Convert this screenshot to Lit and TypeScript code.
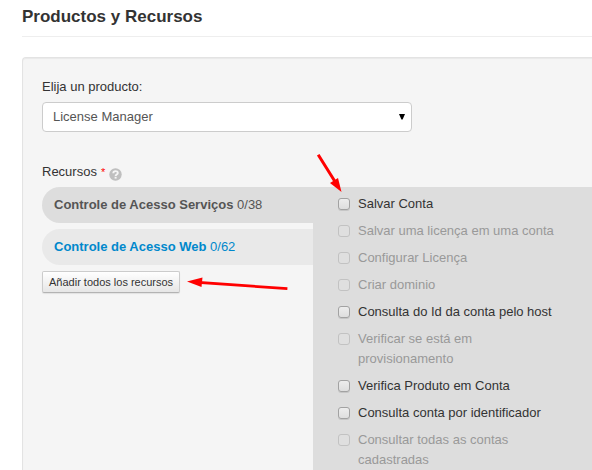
import { LitElement, html, css } from "lit";
import { customElement, property, state } from "lit/decorators.js";
import { classMap } from "lit/directives/class-map.js";

interface Resource {
  label: string;
  enabled: boolean;
}

interface Group {
  name: string;
  count: string;
}

const GROUPS: Group[] = [
  { name: "Controle de Acesso Serviços", count: "0/38" },
  { name: "Controle de Acesso Web", count: "0/62" },
];

const RESOURCES: Resource[] = [
  { label: "Salvar Conta", enabled: true },
  { label: "Salvar uma licença em uma conta", enabled: false },
  { label: "Configurar Licença", enabled: false },
  { label: "Criar dominio", enabled: false },
  { label: "Consulta do Id da conta pelo host", enabled: true },
  { label: "Verificar se está em provisionamento", enabled: false },
  { label: "Verifica Produto em Conta", enabled: true },
  { label: "Consulta conta por identificador", enabled: true },
  { label: "Consultar todas as contas cadastradas", enabled: false },
];

@customElement("resource-list")
export class ResourceList extends LitElement {
  @property({ attribute: false }) items: Resource[] = [];

  static styles = css`
    :host {
      display: block;
    }
    .list {
      list-style: none;
      margin: 0;
      padding: 0;
      display: flex;
      flex-direction: column;
      gap: 7px;
      max-width: 224px;
    }
    .row {
      display: grid;
      grid-template-columns: 12px 1fr;
      column-gap: 8px;
      align-items: start;
      color: #333;
    }
    .off {
      color: #999;
    }
    .box {
      appearance: none;
      box-sizing: border-box;
      width: 12px;
      height: 12px;
      margin: 4px 0 0;
      border: 1px solid #a2a2a2;
      border-radius: 3px;
      background: linear-gradient(#ededed, #dedede);
      box-shadow: 0 1px 0 rgba(0, 0, 0, 0.1);
    }
    .box:checked {
      background: #555;
    }
    .box:disabled {
      border-color: #c2c2c2;
      background: #dfdfdf;
      box-shadow: none;
    }
  `;

  render() {
    return html`<ul class="list">
      ${this.items.map(
        (item) => html`<li>
          <label class=${classMap({ row: true, off: !item.enabled })}>
            <input class="box" type="checkbox" ?disabled=${!item.enabled} />
            <span>${item.label}</span>
          </label>
        </li>`,
      )}
    </ul>`;
  }
}

@customElement("app-root")
export class AppRoot extends LitElement {
  @state() private active = 0;

  static styles = css`
    :host {
      display: block;
      font: 13px/20px "Liberation Sans", Arial, sans-serif;
      color: #333;
      background: #fff;
      overflow: hidden;
    }
    .page {
      box-sizing: border-box;
      min-height: 100vh;
      padding: 7px 0 0 22px;
      display: flex;
      flex-direction: column;
    }
    .title {
      margin: 0 0 20px;
      padding-bottom: 9px;
      border-bottom: 1px solid #eee;
      font-size: 17px;
      line-height: 20px;
      font-weight: bold;
    }
    .well {
      flex: 1;
      display: flex;
      flex-direction: column;
      border: 1px solid #e3e3e3;
      border-width: 1px 0 0 1px;
      border-radius: 4px 0 0 0;
      background: #f5f5f5;
      box-shadow: inset 0 1px 1px rgba(0, 0, 0, 0.05);
      padding: 19px 0 0 19px;
    }
    .caption {
      display: block;
      margin-bottom: 5px;
    }
    .picker {
      position: relative;
      width: 370px;
      max-width: 100%;
      margin-bottom: 30px;
    }
    .select {
      appearance: none;
      display: block;
      box-sizing: border-box;
      width: 100%;
      height: 30px;
      margin: 0;
      padding: 0 24px 0 10px;
      border: 1px solid #ccc;
      border-radius: 4px;
      background: #fff;
      color: #555;
      font: inherit;
    }
    .caret {
      position: absolute;
      right: 7px;
      top: 12px;
      pointer-events: none;
    }
    .heading {
      display: flex;
      gap: 4px;
      margin-bottom: 5px;
    }
    .required {
      color: #f00;
      font-size: 11px;
    }
    .help {
      margin-top: 6px;
      width: 13px;
      height: 13px;
    }
    .columns {
      flex: 1;
      display: grid;
      grid-template-columns: 271px 1fr;
    }
    .side {
      position: relative;
      display: flex;
      flex-direction: column;
      align-items: flex-start;
      gap: 6px;
    }
    .tab {
      box-sizing: border-box;
      width: 100%;
      height: 36px;
      padding: 0 12px;
      border: 0;
      border-radius: 18px 0 0 18px;
      background: #e9e9e9;
      color: #0088cc;
      font: inherit;
      text-align: left;
      cursor: pointer;
    }
    .current {
      background: #ddd;
      color: #555;
    }
    .add {
      height: 22px;
      padding: 0 6px;
      border: 1px solid #ccc;
      border-bottom-color: #b3b3b3;
      border-radius: 2px;
      background: linear-gradient(#fff, #e6e6e6);
      box-shadow: 0 1px 1px rgba(0, 0, 0, 0.08);
      color: #333;
      font: inherit;
      font-size: 11px;
      cursor: pointer;
    }
    .panel {
      position: relative;
      background: #ddd;
      padding: 7px 0 0 25px;
    }
    .arrow {
      position: absolute;
      pointer-events: none;
    }
    .to-box {
      left: 2px;
      top: -35px;
    }
    .to-button {
      left: 143px;
      top: 86px;
    }
  `;

  render() {
    return html`<main class="page">
      <h1 class="title">Productos y Recursos</h1>
      <section class="well">
        <label class="caption" for="product">Elija un producto:</label>
        <div class="picker">
          <select class="select" id="product">
            <option>License Manager</option>
          </select>
          <svg class="caret" width="6" height="6" viewBox="0 0 6 6" aria-hidden="true">
            <path d="M0 0H6L3.600 5.500H2.400Z" />
          </svg>
        </div>
        <div class="heading">
          <span>Recursos</span>
          <span class="required">*</span>
          <svg class="help" viewBox="0 0 13 13" role="img" aria-label="Ayuda">
            <circle cx="6.5" cy="6.5" r="6.2" fill="#bfbfbf" />
            <path
              d="M4.3 5.2C4.3 2.5 8.8 2.5 8.8 5C8.8 6.6 6.6 6.3 6.6 8"
              fill="none"
              stroke="#f5f5f5"
              stroke-width="1.9"
            />
            <path d="M5.6 8.8h2v1.8H5.6z" fill="#f5f5f5" />
          </svg>
        </div>
        <div class="columns">
          <div class="side">
            ${GROUPS.map(
              (group, i) => html`<button
                class=${classMap({ tab: true, current: i === this.active })}
                @click=${() => (this.active = i)}
              >
                <strong>${group.name}</strong> ${group.count}
              </button>`,
            )}
            <button class="add">Añadir todos los recursos</button>
            <svg class="arrow to-button" width="104" height="20" viewBox="0 0 104 20" aria-hidden="true">
              <path d="M14 9.5L101 15.500" fill="none" stroke="#f00" stroke-width="2.8" stroke-linecap="square" />
              <path d="M2 8.5L17.500 4.500L16.500 14Z" fill="#f00" />
            </svg>
          </div>
          <div class="panel">
            <resource-list .items=${RESOURCES}></resource-list>
            <svg class="arrow to-box" width="30" height="42" viewBox="0 0 30 42" aria-hidden="true">
              <path d="M4 4L19 28" fill="none" stroke="#f00" stroke-width="3" stroke-linecap="square" />
              <path d="M26.500 40L15 31L23 26Z" fill="#f00" />
            </svg>
          </div>
        </div>
      </section>
    </main>`;
  }
}
